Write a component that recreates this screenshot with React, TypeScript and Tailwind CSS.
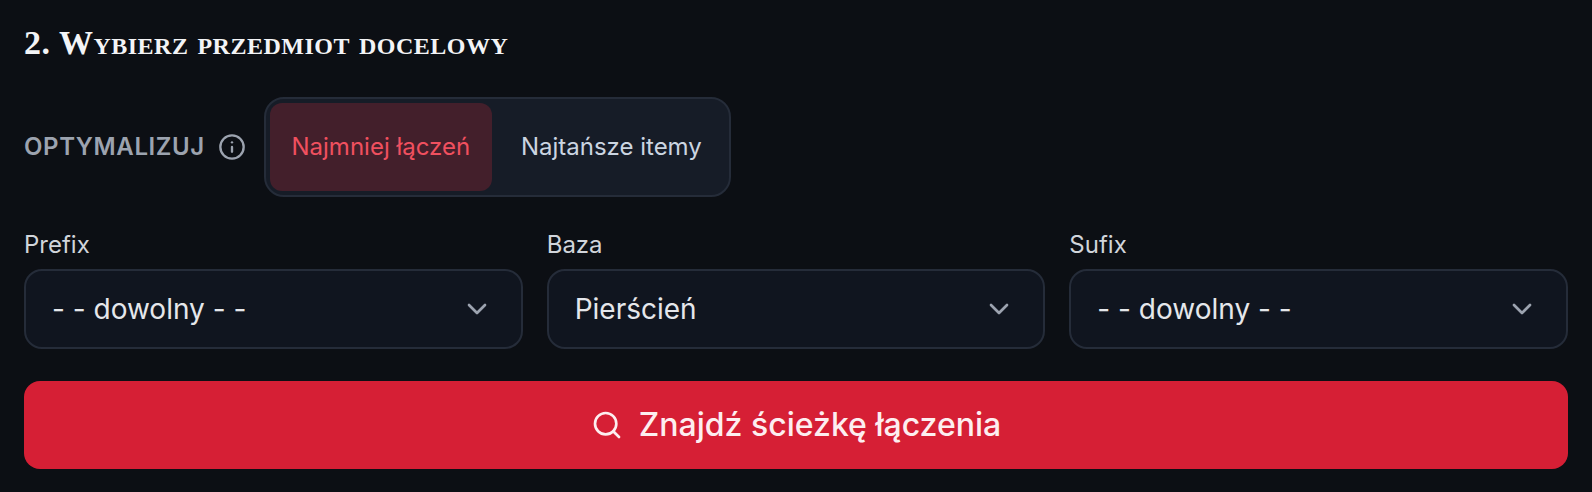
import React from 'react';
import { ChevronDown, Info, Search } from 'lucide-react';

const SelectField: React.FC<{ label: string; value: string }> = ({ label, value }) => (
  <div className="flex-1 min-w-0">
    <div className="text-[24px] leading-[32px] text-[#d1d5db] mb-[8px]">{label}</div>
    <div className="h-[80px] flex items-center justify-between pl-[26px] pr-[28px] rounded-[18px] border-2 border-[#252c39] bg-[#10151f]">
      <span className="text-[28px] text-[#e5e7eb]">{value}</span>
      <ChevronDown size={32} strokeWidth={2} className="text-[#9ca3af]" />
    </div>
  </div>
);

export default function App() {
  return (
    <div className="w-[1592px] h-[492px] overflow-hidden bg-[#0c0f14] px-[24px] pt-[27px] font-['Inter',sans-serif]">
      <h2 className="text-[34px] leading-[32px] tracking-[0.5px] font-bold text-[#f3f4f6] font-['Liberation_Serif',serif] [font-variant:small-caps]">
        2. Wybierz przedmiot docelowy
      </h2>

      <div className="flex items-center mt-[38px]">
        <span className="text-[24px] font-semibold tracking-[0.6px] text-[#9ca3af]">OPTYMALIZUJ</span>
        <Info size={28} strokeWidth={2} className="ml-[13px] text-[#9ca3af]" />
        <div className="ml-[18px] w-[467px] h-[100px] flex p-[4px] rounded-[20px] border-2 border-[#252c39] bg-[#161c27]">
          <button className="w-[222px] rounded-[12px] bg-[#431f2b] text-[24px] text-[#f0505f]">Najmniej łączeń</button>
          <button className="flex-1 pl-[6px] text-[24px] text-[#cbd5e1]">Najtańsze itemy</button>
        </div>
      </div>

      <div className="flex gap-[24px] mt-[32px]">
        <SelectField label="Prefix" value="- - dowolny - -" />
        <SelectField label="Baza" value="Pierścień" />
        <SelectField label="Sufix" value="- - dowolny - -" />
      </div>

      <button className="w-full h-[88px] mt-[32px] flex items-center justify-center gap-[16px] rounded-[16px] bg-[#d61f35] text-[32px] font-medium text-[#fdeef0]">
        <Search size={32} strokeWidth={2} />
        Znajdź ścieżkę łączenia
      </button>
    </div>
  );
}
